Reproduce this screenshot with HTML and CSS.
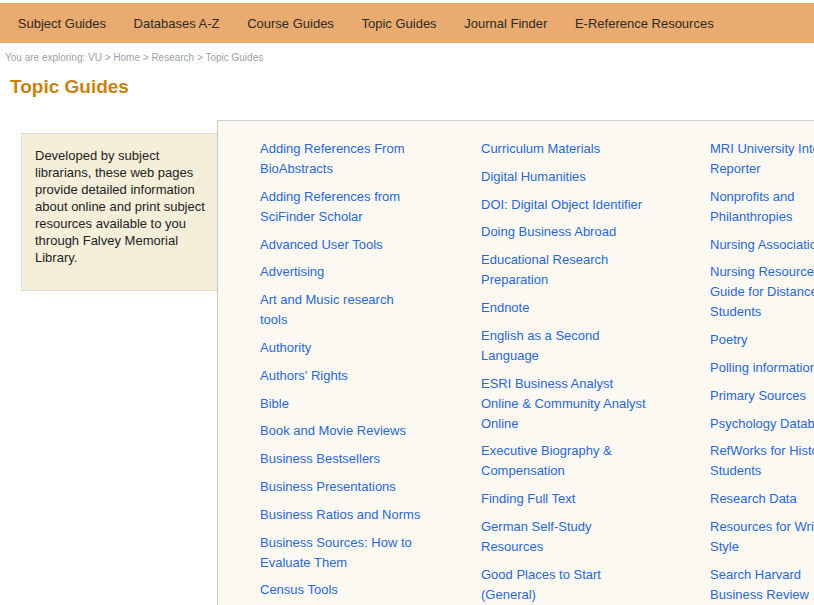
FILE: index.html
```html
<!DOCTYPE html>
<html lang="en">
<head>
<meta charset="utf-8">
<title>Topic Guides</title>
<link rel="stylesheet" href="styles.css">
</head>
<body>
<nav class="topnav">
  <a href="#">Subject Guides</a>
  <a href="#">Databases A-Z</a>
  <a href="#">Course Guides</a>
  <a href="#">Topic Guides</a>
  <a href="#">Journal Finder</a>
  <a href="#">E-Reference Resources</a>
</nav>
<div class="crumbs">You are exploring: VU &gt; Home &gt; Research &gt; Topic Guides</div>
<h1 class="title">Topic Guides</h1>
<div class="content">
  <aside class="intro">Developed by subject librarians, these web pages provide detailed information about online and print subject resources available to you through Falvey Memorial Library.</aside>
  <section class="panel">
    <ul class="col c1">
      <li><a href="#">Adding References From BioAbstracts</a></li>
      <li><a href="#">Adding References from SciFinder Scholar</a></li>
      <li><a href="#">Advanced User Tools</a></li>
      <li><a href="#">Advertising</a></li>
      <li><a href="#">Art and Music research tools</a></li>
      <li><a href="#">Authority</a></li>
      <li><a href="#">Authors' Rights</a></li>
      <li><a href="#">Bible</a></li>
      <li><a href="#">Book and Movie Reviews</a></li>
      <li><a href="#">Business Bestsellers</a></li>
      <li><a href="#">Business Presentations</a></li>
      <li><a href="#">Business Ratios and Norms</a></li>
      <li><a href="#">Business Sources: How to Evaluate Them</a></li>
      <li><a href="#">Census Tools</a></li>
    </ul>
    <ul class="col c2">
      <li><a href="#">Curriculum Materials</a></li>
      <li><a href="#">Digital Humanities</a></li>
      <li><a href="#">DOI: Digital Object Identifier</a></li>
      <li><a href="#">Doing Business Abroad</a></li>
      <li><a href="#">Educational Research Preparation</a></li>
      <li><a href="#">Endnote</a></li>
      <li><a href="#">English as a Second Language</a></li>
      <li><a href="#">ESRI Business Analyst Online &amp; Community Analyst Online</a></li>
      <li><a href="#">Executive Biography &amp; Compensation</a></li>
      <li><a href="#">Finding Full Text</a></li>
      <li><a href="#">German Self-Study Resources</a></li>
      <li><a href="#">Good Places to Start (General)</a></li>
    </ul>
    <ul class="col c3">
      <li><a href="#">MRI University Internet Reporter</a></li>
      <li><a href="#">Nonprofits and Philanthropies</a></li>
      <li><a href="#">Nursing Associations</a></li>
      <li><a href="#">Nursing Resources Guide for Distance Students</a></li>
      <li><a href="#">Poetry</a></li>
      <li><a href="#">Polling information</a></li>
      <li><a href="#">Primary Sources</a></li>
      <li><a href="#">Psychology Databases</a></li>
      <li><a href="#">RefWorks for History Students</a></li>
      <li><a href="#">Research Data</a></li>
      <li><a href="#">Resources for Writing Style</a></li>
      <li><a href="#">Search Harvard Business Review</a></li>
    </ul>
  </section>
</div>
</body>
</html>
```
FILE: styles.css
```css
html, body {
  margin: 0;
  padding: 0;
  background: #ffffff;
  overflow: hidden;
}
body {
  padding-top: 3px;
  font-family: Arial, "Liberation Sans", sans-serif;
  color: #222;
}
.topnav {
  display: flex;
  align-items: center;
  height: 40px;
  background: #e9ab6f;
  padding-left: 4px;
}
.topnav a {
  font-size: 13px;
  color: #2f2a26;
  text-decoration: none;
  padding: 1px 13.8px 0;
  line-height: 39px;
}
.crumbs {
  font-size: 10px;
  color: #9ea0a8;
  padding-left: 5px;
  margin-top: 9px;
  line-height: 12px;
}
.title {
  margin: 11px 0 0 10px;
  font-size: 19px;
  font-weight: bold;
  color: #c8820f;
  line-height: 24px;
}
.content {
  display: flex;
  align-items: flex-start;
  margin-top: 21px;
  padding-left: 21px;
}
.intro {
  flex: none;
  width: 174px;
  margin-top: 13px;
  padding: 13px 8px 24px 13px;
  background: #f5efda;
  border: 1px solid #dcdcd4;
  border-right: none;
  font-size: 13px;
  line-height: 17px;
  color: #222;
}
.panel {
  flex: none;
  width: 700px;
  min-height: 600px;
  display: grid;
  grid-template-columns: 221px 229px 1fr;
  padding: 18px 0 0 42px;
  background: #fcf9f2;
  border-top: 1px solid #cfcfcf;
  border-left: 1px solid #c8c8c8;
}
.col {
  list-style: none;
  margin: 0;
  padding: 0;
}
.col li {
  font-size: 13px;
  line-height: 20px;
  margin-bottom: 7.8px;
}
.c1 li { max-width: 164px; }
.c2 li { max-width: 171px; }
.c3 li { max-width: 146px; }
.col a {
  color: #2a67d2;
  text-decoration: none;
}
```
